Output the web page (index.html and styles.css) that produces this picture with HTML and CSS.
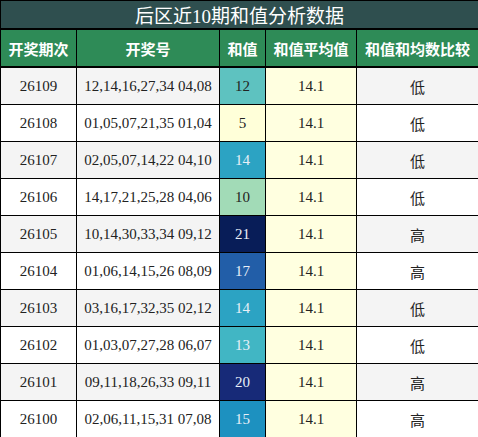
FILE: index.html
```html
<!DOCTYPE html>
<html lang="zh">
<head>
<meta charset="utf-8">
<title>后区近10期和值分析数据</title>
<link rel="stylesheet" href="styles.css">
</head>
<body>
<table class="sum-table">
  <colgroup>
    <col class="c-issue">
    <col class="c-nums">
    <col class="c-sum">
    <col class="c-avg">
    <col class="c-cmp">
  </colgroup>
  <thead>
    <tr class="title-row"><th colspan="5">后区近10期和值分析数据</th></tr>
    <tr class="head-row">
      <th>开奖期次</th><th>开奖号</th><th>和值</th><th>和值平均值</th><th>和值和均数比较</th>
    </tr>
  </thead>
  <tbody>
    <tr class="odd"><td>26109</td><td>12,14,16,27,34 04,08</td><td class="sum s12">12</td><td class="avg">14.1</td><td class="cmp">低</td></tr>
    <tr><td>26108</td><td>01,05,07,21,35 01,04</td><td class="sum s5">5</td><td class="avg">14.1</td><td class="cmp">低</td></tr>
    <tr class="odd"><td>26107</td><td>02,05,07,14,22 04,10</td><td class="sum s14 light">14</td><td class="avg">14.1</td><td class="cmp">低</td></tr>
    <tr><td>26106</td><td>14,17,21,25,28 04,06</td><td class="sum s10">10</td><td class="avg">14.1</td><td class="cmp">低</td></tr>
    <tr class="odd"><td>26105</td><td>10,14,30,33,34 09,12</td><td class="sum s21 light">21</td><td class="avg">14.1</td><td class="cmp">高</td></tr>
    <tr><td>26104</td><td>01,06,14,15,26 08,09</td><td class="sum s17 light">17</td><td class="avg">14.1</td><td class="cmp">高</td></tr>
    <tr class="odd"><td>26103</td><td>03,16,17,32,35 02,12</td><td class="sum s14 light">14</td><td class="avg">14.1</td><td class="cmp">低</td></tr>
    <tr><td>26102</td><td>01,03,07,27,28 06,07</td><td class="sum s13 light">13</td><td class="avg">14.1</td><td class="cmp">低</td></tr>
    <tr class="odd"><td>26101</td><td>09,11,18,26,33 09,11</td><td class="sum s20 light">20</td><td class="avg">14.1</td><td class="cmp">高</td></tr>
    <tr><td>26100</td><td>02,06,11,15,31 07,08</td><td class="sum s15 light">15</td><td class="avg">14.1</td><td class="cmp">高</td></tr>
  </tbody>
</table>
</body>
</html>
```
FILE: styles.css
```css
html, body {
  margin: 0;
  padding: 0;
  background: #ffffff;
}

.sum-table {
  width: 478px;
  border-collapse: collapse;
  table-layout: fixed;
  font-family: "Liberation Serif", "Noto Sans CJK SC", serif;
  font-size: 15px;
  color: #222222;
}

.c-issue { width: 76px; }
.c-nums { width: 143px; }
.c-sum { width: 46px; }
.c-avg { width: 91px; }
.c-cmp { width: 122px; }

.sum-table th,
.sum-table td {
  border: 1px solid #000000;
  padding: 0;
  text-align: center;
  vertical-align: middle;
}

.title-row th {
  height: 27px;
  background: #2f4f4f;
  color: #ffffff;
  font-weight: normal;
  font-size: 19px;
  font-family: "Liberation Serif", "Noto Sans CJK SC", sans-serif;
}

.head-row th {
  height: 36px;
  background: #2e8b57;
  color: #ffffff;
  font-weight: bold;
  font-size: 15px;
  font-family: "Noto Sans CJK SC", sans-serif;
  border-width: 2px 1px;
}

.sum-table tbody td {
  height: 36px;
  background: #ffffff;
}

.sum-table tbody tr.odd td {
  background: #f4f4f4;
}

.sum-table tbody td.avg,
.sum-table tbody tr.odd td.avg {
  background: #ffffe0;
}

.sum-table td.cmp {
  font-family: "Noto Sans CJK SC", sans-serif;
}

.sum-table td.light { color: #e8f0f8; }

.sum-table tbody tr td.s5  { background: #ffffd9; }
.sum-table tbody tr td.s10 { background: #a2dbb7; }
.sum-table tbody tr td.s12 { background: #5ec2c0; }
.sum-table tbody tr td.s13 { background: #41b6c4; }
.sum-table tbody tr td.s14 { background: #2ca3c3; }
.sum-table tbody tr td.s15 { background: #1d91c0; }
.sum-table tbody tr td.s17 { background: #225ea8; }
.sum-table tbody tr td.s20 { background: #172a78; }
.sum-table tbody tr td.s21 { background: #081d58; }
```
